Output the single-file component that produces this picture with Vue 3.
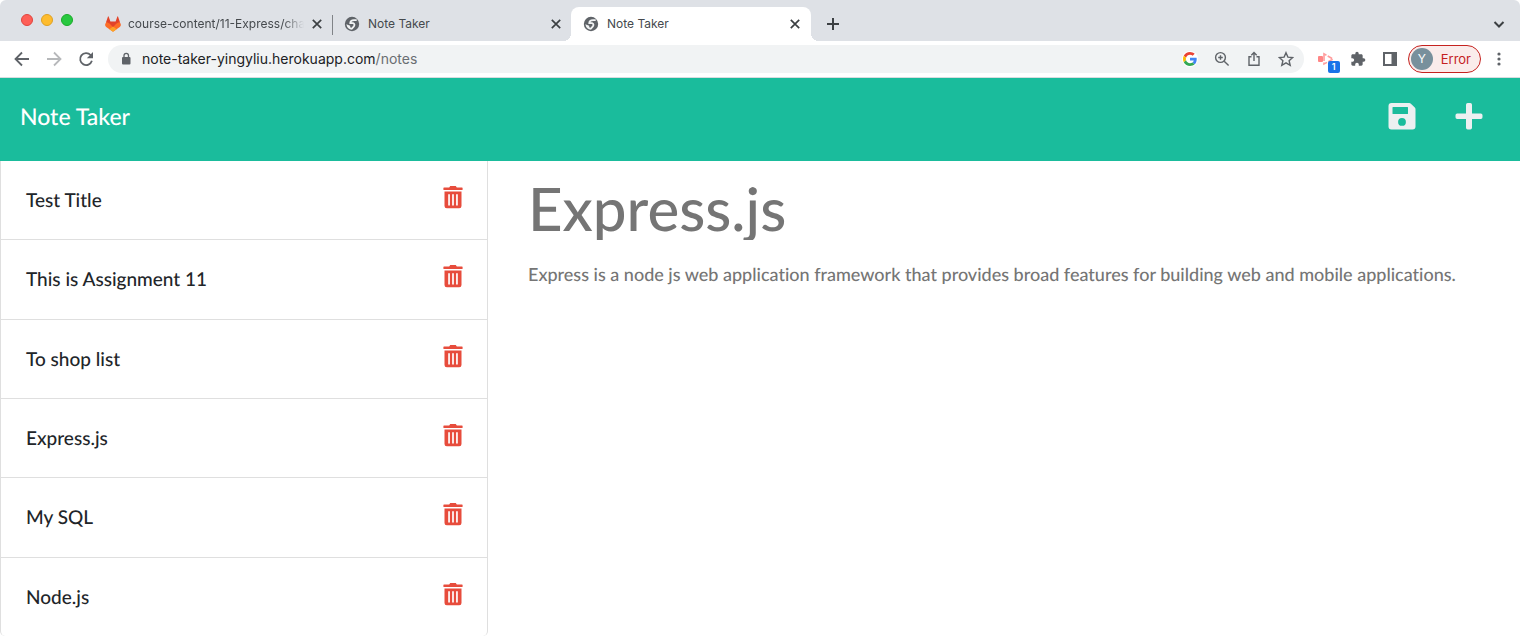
<script setup>
import { ref } from 'vue'

const tabs = [
  { title: 'course-content/11-Express/challenge', icon: 'gitlab', active: false },
  { title: 'Note Taker', icon: 'globe', active: false },
  { title: 'Note Taker', icon: 'globe', active: true }
]
const notes = ref(['Test Title', 'This is Assignment 11', 'To shop list', 'Express.js', 'My SQL', 'Node.js'])
const title = ref('Express.js')
const text = ref(
  'Express is a node js web application framework that provides broad features for building web and mobile applications.'
)
const removeNote = (i) => notes.value.splice(i, 1)
</script>

<template>
  <div class="window">
    <header class="tabstrip">
      <div class="lights"><i class="red"></i><i class="yellow"></i><i class="green"></i></div>
      <div v-for="(tab, i) in tabs" :key="i" class="tab" :class="{ active: tab.active, first: i === 0 }">
        <svg v-if="tab.icon === 'gitlab'" class="favicon" viewBox="0 0 16 16">
          <path fill="#e24329" d="M1.100 6 3 .5q.3-.5.600 0L5.400 5.500h5.200L12.400.5q.3-.5.600 0L14.900 6l.6 3.200L8 15 .5 9.200z" />
          <path fill="#fc6d26" d="M.3 8.600 1.200 6Q5 6.800 8 11.500 11 6.800 14.800 6l.9 2.600q.3 1.600-.9 2.500L8 15.800 1.200 11.100Q0 10.200.3 8.600z" />
          <path fill="#fca326" d="M4.300 13.200 8 10.500l3.700 2.700L8 15.800z" />
        </svg>
        <svg v-else class="favicon" viewBox="0 0 16 16">
          <circle cx="8" cy="8" r="7.200" fill="#5f6368" />
          <path fill="none" stroke="#f1f3f4" stroke-width="1.800" stroke-linejoin="round" d="M12.700 4.200H10Q6.400 4.300 6.200 7.200H9.300Q11.200 8.200 9.900 10.400L7.600 12.900" />
          <path fill="#f1f3f4" d="M2.300 8.200 6.200 9.700v1.600l2.200.9-.6 1.600Q3.500 13.400 2.300 8.200z" />
        </svg>
        <span class="tab-title">{{ tab.title }}</span>
        <button class="close" aria-label="Close tab">
          <svg viewBox="0 0 10 10"><path d="M1.500 1.500l7 7M8.500 1.500l-7 7" /></svg>
        </button>
      </div>
      <button class="new-tab" aria-label="New tab">
        <svg viewBox="0 0 14 14"><path d="M7 1v12M1 7h12" /></svg>
      </button>
      <button class="tab-search" aria-label="Search tabs">
        <svg viewBox="0 0 12 12"><path d="M1.500 4 6 8.500 10.500 4" /></svg>
      </button>
    </header>

    <nav class="toolbar">
      <div class="nav-buttons">
        <button aria-label="Back">
          <svg viewBox="0 0 16 16" class="line"><path d="M15 8H2M8 1.500 1.500 8 8 14.500" /></svg>
        </button>
        <button aria-label="Forward" class="faded">
          <svg viewBox="0 0 16 16" class="line"><path d="M1 8h13M8 1.500 14.500 8 8 14.500" /></svg>
        </button>
        <button aria-label="Reload">
          <svg viewBox="0 0 16 16" class="line">
            <path d="M13.900 9.800A6 6 0 1 1 12.600 4L13.500 5" /><path fill="#5f6368" stroke="none" d="M15 1v6.200H8.800z" />
          </svg>
        </button>
      </div>
      <div class="omnibox">
        <svg class="lock" viewBox="0 0 10 14">
          <rect x="1" y="5" width="8.500" height="7.500" rx="1" fill="#5f6368" />
          <path d="M3 5.500V3.600a2.250 2.250 0 0 1 4.500 0v1.900" fill="none" stroke="#5f6368" stroke-width="1.300" />
        </svg>
        <div class="url" role="textbox" aria-label="Address">note-taker-yingyliu.herokuapp.com<span>/notes</span></div>
        <div class="omni-actions">
          <button class="google" aria-label="Google">
            <svg viewBox="0 0 48 48">
              <path fill="#EA4335" d="M24 9.500c3.540 0 6.710 1.220 9.210 3.600l6.850-6.850C35.900 2.380 30.470 0 24 0 14.620 0 6.510 5.380 2.560 13.220l7.980 6.190C12.430 13.720 17.740 9.500 24 9.500z" />
              <path fill="#4285F4" d="M46.980 24.550c0-1.570-.15-3.090-.38-4.550H24v9.020h12.940c-.58 2.960-2.260 5.480-4.780 7.180l7.730 6c4.510-4.180 7.090-10.360 7.090-17.650z" />
              <path fill="#FBBC05" d="M10.530 28.590c-.48-1.450-.76-2.990-.76-4.590s.27-3.140.76-4.590l-7.980-6.190C.92 16.460 0 20.120 0 24c0 3.880.92 7.540 2.560 10.780l7.970-6.190z" />
              <path fill="#34A853" d="M24 48c6.480 0 11.930-2.130 15.890-5.810l-7.730-6c-2.150 1.450-4.920 2.300-8.160 2.300-6.260 0-11.570-4.220-13.470-9.910l-7.980 6.190C6.510 42.620 14.620 48 24 48z" />
            </svg>
          </button>
          <button aria-label="Zoom">
            <svg viewBox="0 0 16 16" class="thin"><circle cx="6.500" cy="6.500" r="4.900" /><path d="M10.200 10.200l4.400 4.400M4.200 6.500h4.600M6.500 4.200v4.600" /></svg>
          </button>
          <button aria-label="Share">
            <svg viewBox="0 0 16 16" class="thin"><path d="M5.500 5.700H3v8.600h10V5.700h-2.500M8 10V1.800M5.300 4.300 8 1.600l2.700 2.700" /></svg>
          </button>
          <button aria-label="Bookmark">
            <svg viewBox="0 0 16 16" class="thin"><path d="M8 1.700l1.900 4.400 4.800.4-3.600 3.200 1.100 4.700L8 11.900l-4.200 2.500 1.100-4.700L1.300 6.500l4.800-.4z" /></svg>
          </button>
        </div>
      </div>
      <div class="extensions">
        <button class="recorder" aria-label="Recorder extension">
          <svg viewBox="0 0 16 16">
            <rect x="0" y="5" width="5" height="6" rx="1" fill="#ff8686" />
            <path fill="none" stroke="#ff9c9c" stroke-width="1.600" stroke-dasharray="5 1.500" d="M6 5V2.800L15 8l-9 5V5z" />
          </svg>
          <b>1</b>
        </button>
        <button aria-label="Extensions">
          <svg viewBox="0 0 24 24">
            <path fill="#5f6368" d="M20.500 11H19V7c0-1.100-.9-2-2-2h-4V3.500a2.500 2.500 0 0 0-5 0V5H4c-1.100 0-1.990.9-1.990 2v3.800H3.500c1.490 0 2.700 1.210 2.700 2.700s-1.210 2.700-2.700 2.700H2V20c0 1.100.9 2 2 2h3.800v-1.500c0-1.490 1.210-2.700 2.700-2.700s2.700 1.210 2.700 2.700V22H17c1.100 0 2-.9 2-2v-4h1.500a2.500 2.500 0 0 0 0-5z" />
          </svg>
        </button>
        <button aria-label="Side panel">
          <svg viewBox="0 0 16 16"><path fill="#5f6368" fill-rule="evenodd" d="M1 1h14v14H1zM3 3v10h6.500V3z" /></svg>
        </button>
      </div>
      <button class="profile"><span class="avatar">Y</span>Error</button>
      <button class="menu" aria-label="Menu">
        <svg viewBox="0 0 4 16"><circle cx="2" cy="3" r="1.600" /><circle cx="2" cy="8" r="1.600" /><circle cx="2" cy="13" r="1.600" /></svg>
      </button>
    </nav>

    <div class="app-bar">
      <a href="#" class="brand">Note Taker</a>
      <div class="app-actions">
        <button aria-label="Save note">
          <svg viewBox="0 0 28 28">
            <path fill-rule="evenodd" d="M3.500 1h17.700q1 0 1.700.7l3.900 3.900q.7.700.7 1.700v17.200q0 3-3 3h-21q-3 0-3-3V4q0-3 3-3zM5 5q-.5 0-.5.500v6q0 .5.500.5h14.500q.5 0 .5-.5v-6q0-.5-.5-.5zM14 16a3.900 3.900 0 1 0 0 7.800 3.900 3.900 0 0 0 0-7.800z" />
          </svg>
        </button>
        <button aria-label="New note">
          <svg viewBox="0 0 28 28">
            <path d="M12.700 1h2.600q1.700 0 1.700 1.700V11.500h8.800q1.700 0 1.700 1.700v2.100q0 1.700-1.700 1.700H17v8.800q0 1.700-1.700 1.700h-2.600q-1.700 0-1.700-1.700V17H2.200Q.5 17 .5 15.300v-2.100q0-1.700 1.700-1.700H11V2.700Q11 1 12.700 1z" />
          </svg>
        </button>
      </div>
    </div>

    <main class="content">
      <ul class="notes">
        <li v-for="(note, i) in notes" :key="note">
          <span>{{ note }}</span>
          <button :aria-label="'Delete ' + note" @click="removeNote(i)">
            <svg viewBox="0 0 20 24">
              <path fill-rule="evenodd" d="M1 2.500h5.200L7.200 1h5.600l1 1.500H19q.6 0 .6.600V4.500q0 .6-.6.600H1q-.6 0-.6-.6V3.100q0-.6.600-.6zM1.500 6.500h17V21q0 2.300-2.300 2.300H3.800Q1.500 23.300 1.500 21zM5.200 9.300v11.200h1.700V9.300zM9.150 9.300v11.200h1.700V9.300zM13.100 9.300v11.200h1.700V9.300z" />
            </svg>
          </button>
        </li>
      </ul>
      <section class="editor">
        <input v-model="title" class="note-title" type="text" aria-label="Note title" />
        <textarea v-model="text" class="note-text" aria-label="Note text"></textarea>
      </section>
    </main>
  </div>
</template>

<style>
body {
  margin: 0;
}
</style>

<style scoped>
* {
  box-sizing: border-box;
}
button {
  padding: 0;
  border: 0;
  background: none;
  font: inherit;
  color: inherit;
  cursor: pointer;
}
svg {
  display: block;
  width: 100%;
  height: 100%;
}
.window {
  display: flex;
  flex-direction: column;
  min-height: 100vh;
  background: #fff;
  font-family: Inter, "Liberation Sans", sans-serif;
}

/* tab strip */
.tabstrip {
  display: flex;
  align-items: flex-end;
  height: 41px;
  background: #dee1e6;
  border-radius: 6px 6px 0 0;
}
.lights {
  display: flex;
  gap: 8px;
  align-self: flex-start;
  padding: 14px 20px 0 21px;
}
.lights i {
  width: 12px;
  height: 12px;
  border-radius: 50%;
}
.red {
  background: #fe5f57;
  border: 1px solid #e0443e;
}
.yellow {
  background: #febc2e;
  border: 1px solid #dea123;
}
.green {
  background: #28c840;
  border: 1px solid #1aab29;
}
.tab {
  position: relative;
  display: flex;
  align-items: center;
  gap: 8px;
  width: 239px;
  height: 34px;
  padding: 0 9px 0 12px;
  font-size: 12px;
  color: #45494d;
}
.tab.first::after {
  content: "";
  position: absolute;
  right: -1px;
  top: 8px;
  width: 1px;
  height: 20px;
  background: #808387;
}
.tab.active {
  width: 240px;
  padding-right: 10px;
  background: #fff;
  border-radius: 8px 8px 0 0;
}
.tab.active::before,
.tab.active::after {
  content: "";
  position: absolute;
  bottom: 0;
  width: 8px;
  height: 8px;
}
.tab.active::before {
  right: 100%;
  background: radial-gradient(circle at 0 0, transparent 8px, #fff 8px);
}
.tab.active::after {
  left: 100%;
  background: radial-gradient(circle at 100% 0, transparent 8px, #fff 8px);
}
.favicon {
  flex: none;
  width: 16px;
  height: 16px;
}
.tab-title {
  flex: 1;
  overflow: hidden;
  white-space: nowrap;
  line-height: 16px;
}
.tab.first {
  gap: 7px;
}
.tab.first .tab-title {
  mask-image: linear-gradient(to right, #000 88%, transparent);
}
.close {
  flex: none;
  width: 12px;
  height: 12px;
}
.close svg,
.new-tab svg,
.tab-search svg {
  fill: none;
  stroke: #3c4043;
  stroke-width: 2;
}
.close svg {
  stroke-width: 1.4;
}
.new-tab {
  width: 14px;
  height: 14px;
  margin: 0 0 10px 15px;
}
.tab-search {
  width: 12px;
  height: 12px;
  margin: 0 15px 11px auto;
}

/* toolbar */
.toolbar {
  display: flex;
  align-items: center;
  height: 37px;
  padding: 0 19px 0 14px;
  border-bottom: 1px solid #d8dcdf;
}
.nav-buttons {
  display: flex;
  gap: 16px;
}
.nav-buttons button,
.omni-actions button,
.extensions button {
  width: 16px;
  height: 16px;
}
.line {
  fill: none;
  stroke: #5f6368;
  stroke-width: 1.8;
}
.thin {
  fill: none;
  stroke: #5f6368;
  stroke-width: 1.4;
}
.faded {
  opacity: 0.45;
}
.omnibox {
  display: flex;
  flex: 1;
  align-items: center;
  height: 28px;
  margin-left: 14px;
  padding: 0 10px 0 13px;
  border-radius: 14px;
  background: #f1f3f4;
}
.lock {
  width: 10px;
  height: 14px;
  margin-right: 11px;
}
.url {
  flex: 1;
  font-size: 14px;
  line-height: 20px;
  color: #202124;
}
.url span {
  color: #6a6e72;
}
.omni-actions {
  display: flex;
  gap: 16px;
}
.omni-actions .google {
  padding: 1px;
  border-radius: 50%;
  background: #fff;
}
.extensions {
  display: flex;
  gap: 16px;
  margin: 0 10px 0 14px;
}
.recorder {
  position: relative;
}
.recorder b {
  position: absolute;
  left: 10px;
  top: 10px;
  width: 12px;
  height: 12px;
  border-radius: 2px;
  background: #1a73e8;
  color: #fff;
  font-size: 9px;
  line-height: 12px;
  font-weight: 600;
}
.profile {
  display: flex;
  align-items: center;
  gap: 8px;
  height: 28px;
  padding: 0 9px 0 2px;
  border: 1px solid #c5221f;
  border-radius: 14px;
  background: #faeceb;
  color: #c5221f;
  font-size: 13px;
}
.avatar {
  width: 22px;
  height: 22px;
  border-radius: 50%;
  background: #78909c;
  color: #fff;
  font-size: 12px;
  line-height: 22px;
}
.menu {
  width: 4px;
  height: 16px;
  margin-left: 16px;
}
.menu svg {
  fill: #5f6368;
}

/* application */
.app-bar {
  display: flex;
  align-items: center;
  justify-content: space-between;
  height: 83px;
  padding: 0 37px 8px 20px;
  background: #1abc9c;
  font-family: Lato, sans-serif;
  font-variant-ligatures: none;
  text-rendering: geometricPrecision;
}
.brand {
  color: #fff;
  font-size: 23px;
  font-weight: 500;
  line-height: 36px;
  text-decoration: none;
}
.app-actions {
  display: flex;
  gap: 39px;
}
.app-actions button {
  width: 28px;
  height: 28px;
}
.app-actions svg {
  fill: #ecf0f1;
}
.content {
  display: flex;
  flex: 1;
  font-family: Lato, sans-serif;
  font-weight: 500;
  font-variant-ligatures: none;
  text-rendering: geometricPrecision;
}
.notes {
  display: flex;
  flex-direction: column;
  flex: none;
  width: 488px;
  margin: 0;
  padding: 0;
  list-style: none;
  border: 1px solid #dfdfdf;
  border-width: 0 1px;
  border-radius: 0 0 5px 5px;
}
.notes li {
  display: flex;
  flex: 1;
  align-items: center;
  justify-content: space-between;
  padding: 2px 24px 0 25px;
  font-size: 19px;
  line-height: 28px;
  color: #212529;
}
.notes li + li {
  border-top: 1px solid #dfdfdf;
}
.notes button {
  width: 20px;
  height: 24px;
  margin-bottom: 8px;
}
.notes svg {
  fill: #e74c3c;
}
.editor {
  display: flex;
  flex: 1;
  flex-direction: column;
  min-width: 0;
  padding: 15px 20px 0 40px;
}
.note-title,
.note-text {
  width: 100%;
  padding: 0;
  border: 0;
  outline: 0;
  background: none;
  color: #757575;
  font-family: inherit;
  font-weight: inherit;
  font-variant-ligatures: none;
  text-rendering: inherit;
}
.note-title {
  height: 64px;
  font-size: 60px;
  line-height: 64px;
}
.note-text {
  flex: 1;
  margin-top: 20px;
  font-size: 18px;
  line-height: 28px;
  resize: none;
}
</style>
